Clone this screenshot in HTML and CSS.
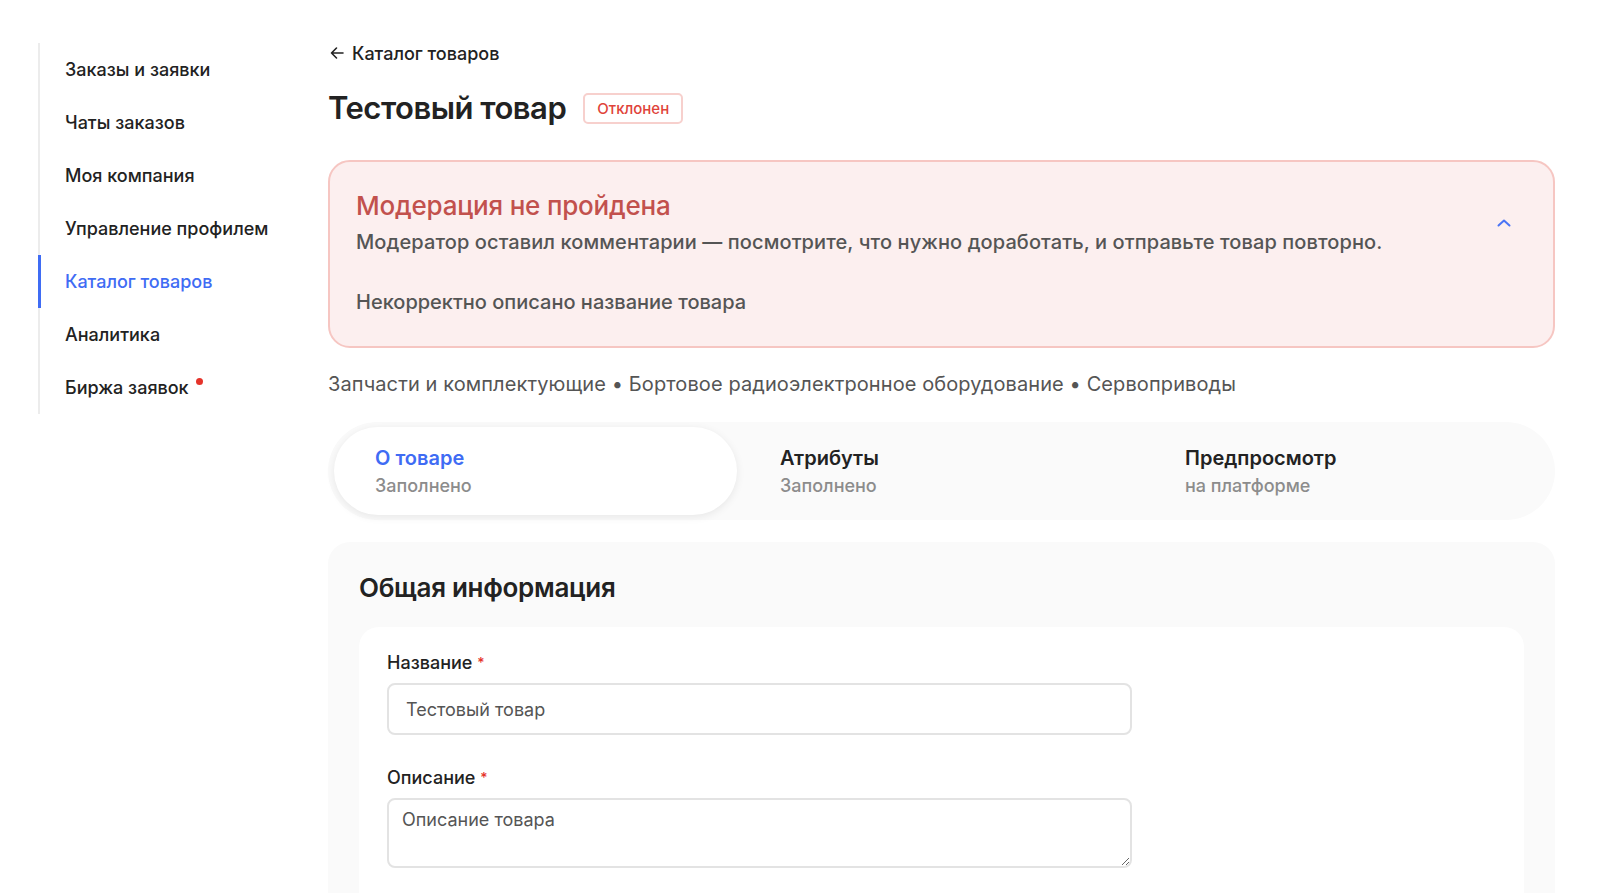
FILE: index.html
```html
<!DOCTYPE html>
<html lang="ru">
<head>
<meta charset="utf-8">
<title>Тестовый товар</title>
<link rel="stylesheet" href="styles.css">
</head>
<body>
<div class="layout">
  <aside class="sidebar">
    <nav class="nav">
      <a class="nav-item">Заказы и заявки</a>
      <a class="nav-item">Чаты заказов</a>
      <a class="nav-item">Моя компания</a>
      <a class="nav-item">Управление профилем</a>
      <a class="nav-item active">Каталог товаров</a>
      <a class="nav-item">Аналитика</a>
      <a class="nav-item">Биржа заявок<span class="dot"></span></a>
    </nav>
  </aside>
  <main class="main">
    <a class="back">
      <svg class="back-icon" width="14" height="14" viewBox="0 0 14 14" fill="none" stroke="#222" stroke-width="1.6" stroke-linecap="round" stroke-linejoin="round"><path d="M13 7H1.5M6.5 2L1.5 7l5 5"/></svg>
      Каталог товаров
    </a>
    <div class="title-row">
      <h1 class="title">Тестовый товар</h1>
      <span class="badge">Отклонен</span>
    </div>

    <section class="alert">
      <div class="alert-body">
        <div class="alert-title">Модерация не пройдена</div>
        <div class="alert-sub">Модератор оставил комментарии — посмотрите, что нужно доработать, и отправьте товар повторно.</div>
        <div class="alert-comment">Некорректно описано название товара</div>
      </div>
      <svg class="chevron" width="14" height="8" viewBox="0 0 14 8" fill="none" stroke="#4a74f5" stroke-width="2" stroke-linecap="round" stroke-linejoin="round"><path d="M1.5 6.5L7 1.5l5.5 5"/></svg>
    </section>

    <div class="path">Запчасти и комплектующие • Бортовое радиоэлектронное оборудование • Сервоприводы</div>

    <div class="tabs">
      <div class="tab active">
        <div class="tab-label">О товаре</div>
        <div class="tab-sub">Заполнено</div>
      </div>
      <div class="tab">
        <div class="tab-label">Атрибуты</div>
        <div class="tab-sub">Заполнено</div>
      </div>
      <div class="tab">
        <div class="tab-label">Предпросмотр</div>
        <div class="tab-sub">на платформе</div>
      </div>
    </div>

    <section class="card">
      <h2 class="card-title">Общая информация</h2>
      <div class="card-inner">
        <div class="field">
          <label class="label">Название <span class="req">*</span></label>
          <input class="input" type="text" value="Тестовый товар">
        </div>
        <div class="field">
          <label class="label">Описание <span class="req">*</span></label>
          <textarea class="textarea" placeholder="Описание товара"></textarea>
        </div>
      </div>
    </section>
  </main>
</div>
</body>
</html>
```

FILE: styles.css
```css
html {
  overflow: hidden;
}
body {
  margin: 0;
  background: #fff;
  font-family: Inter, "Noto Sans", sans-serif;
  color: #222;
}

.layout {
  display: flex;
  padding-left: 38px;
  padding-right: 45px;
}

.sidebar {
  width: 290px;
  flex: none;
  padding-top: 43px;
}

.nav {
  display: flex;
  flex-direction: column;
  border-left: 2px solid #ececec;
}

.nav-item {
  position: relative;
  display: block;
  margin-left: -2px;
  border-left: 3px solid transparent;
  padding-left: 24px;
  height: 53px;
  line-height: 53px;
  font-size: 18px;
  font-weight: 500;
  color: #222;
}

.nav-item.active {
  border-left-color: #3f6cf4;
  color: #3f6cf4;
}

.dot {
  position: absolute;
  width: 7px;
  height: 7px;
  border-radius: 50%;
  background: #e5332a;
  margin-left: 7px;
  margin-top: 17px;
}

.main {
  flex: 1;
  min-width: 0;
  padding-top: 42px;
}

.back {
  display: inline-flex;
  align-items: center;
  gap: 8px;
  font-size: 18px;
  font-weight: 500;
  color: #222;
  height: 22px;
}

.back-icon {
  margin-left: 2px;
}

.title-row {
  display: flex;
  align-items: center;
  gap: 17px;
  margin-top: 24px;
}

.title {
  margin: 0;
  font-size: 31px;
  font-weight: 600;
  letter-spacing: -0.5px;
  line-height: 40px;
}

.badge {
  display: inline-flex;
  align-items: center;
  height: 27px;
  padding: 0 12px;
  border: 2px solid #f7d0cd;
  border-radius: 5px;
  color: #e0433a;
  font-size: 15px;
  font-weight: 500;
}

.alert {
  margin-top: 32px;
  display: flex;
  justify-content: space-between;
  align-items: flex-start;
  background: #fcefef;
  border: 2px solid #f6c6c2;
  border-radius: 22px;
  padding: 27px 42px 29px 26px;
}

.alert-title {
  font-size: 26px;
  line-height: 34px;
  font-weight: 500;
  color: #c2514d;
  letter-spacing: -0.2px;
}

.alert-sub {
  margin-top: 4px;
  font-size: 20px;
  line-height: 30px;
  font-weight: 500;
  color: #555;
  letter-spacing: 0.1px;
}

.alert-comment {
  margin-top: 30px;
  font-size: 20px;
  line-height: 30px;
  font-weight: 500;
  color: #555;
}

.chevron {
  margin-top: 30px;
  flex: none;
}

.path {
  margin-top: 21px;
  font-size: 20px;
  line-height: 30px;
  color: #555;
  letter-spacing: 0.1px;
}

.tabs {
  margin-top: 23px;
  display: grid;
  grid-template-columns: repeat(3, 1fr);
  background: #fafafa;
  border-radius: 50px;
  padding: 5px 6px;
  height: 98px;
  box-sizing: border-box;
}

.tab {
  border-radius: 44px;
  padding: 17px 41px 0;
  box-sizing: border-box;
  margin-right: 2px;
}

.tab.active {
  background: #fff;
  box-shadow: 0 2px 8px rgba(0, 0, 0, 0.08);
}

.tab-label {
  font-size: 20px;
  line-height: 28px;
  font-weight: 600;
  color: #222;
}

.tab.active .tab-label {
  color: #3f6cf4;
}

.tab-sub {
  font-size: 18px;
  line-height: 28px;
  font-weight: 500;
  color: #8c8c8c;
}

.card {
  margin-top: 22px;
  background: #fafafa;
  border-radius: 22px;
  padding: 29px 31px 40px;
}

.card-title {
  margin: 0;
  font-size: 26px;
  line-height: 34px;
  font-weight: 600;
  letter-spacing: -0.3px;
}

.card-inner {
  margin-top: 22px;
  background: #fff;
  border-radius: 20px;
  padding: 24px 28px 80px;
}

.field {
  display: flex;
  flex-direction: column;
  width: 745px;
  margin-bottom: 31px;
}

.label {
  font-size: 18px;
  line-height: 24px;
  font-weight: 500;
  color: #222;
  margin-bottom: 8px;
}

.req {
  color: #e5332a;
  font-size: 14px;
  vertical-align: top;
}

.input {
  height: 52px;
  box-sizing: border-box;
  border: 2px solid #e3e3e3;
  border-radius: 8px;
  padding: 0 17px;
  font-family: Inter, "Noto Sans", sans-serif;
  font-size: 18px;
  color: #555;
  background: #fff;
  outline: none;
}

.textarea {
  height: 70px;
  box-sizing: border-box;
  border: 2px solid #e3e3e3;
  border-radius: 8px;
  padding: 8px 13px;
  font-family: Inter, "Noto Sans", sans-serif;
  font-size: 18px;
  line-height: 24px;
  color: #555;
  background: #fff;
  resize: vertical;
  outline: none;
}

.textarea::placeholder {
  color: #555;
}
```
